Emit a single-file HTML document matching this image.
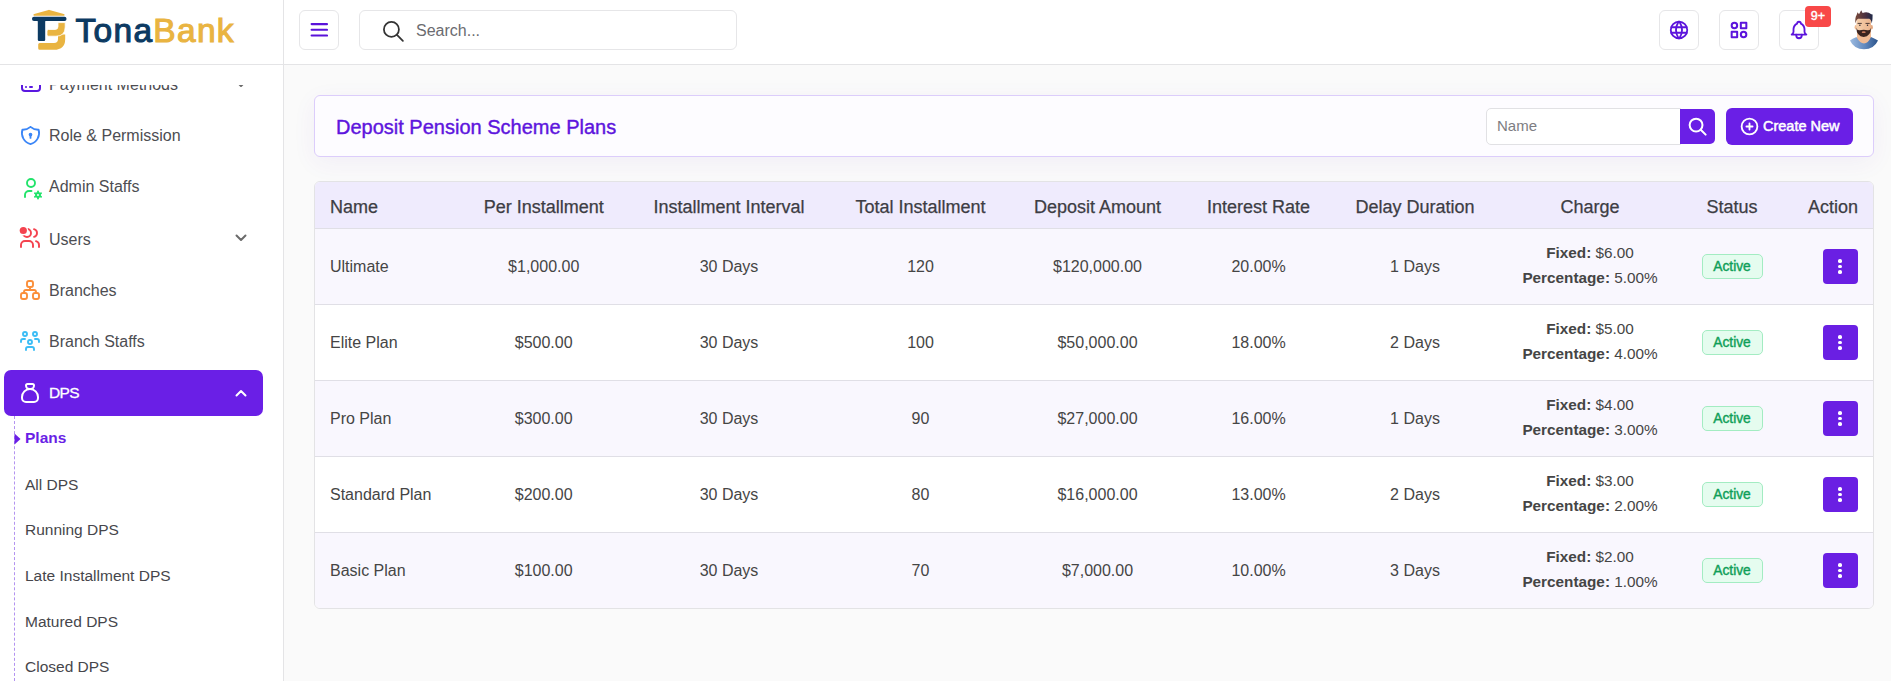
<!DOCTYPE html>
<html><head><meta charset="utf-8">
<style>
*{margin:0;padding:0;box-sizing:border-box}
html,body{width:1891px;height:681px;overflow:hidden;background:#fafafa;font-family:"Liberation Sans",sans-serif;color:#444}
.abs{position:absolute}
#hdr{position:absolute;left:0;top:0;width:1891px;height:65px;background:#fff;border-bottom:1px solid #e4e4e6;z-index:5}
#side{position:absolute;left:0;top:65px;width:284px;height:616px;background:#fff;border-right:1px solid #e4e4e6;z-index:4;overflow:hidden}
.btn40{position:absolute;top:10px;width:40px;height:40px;border:1px solid #e6e6e8;border-radius:6px;background:#fff}
.c{position:absolute;width:0;display:flex;justify-content:center;white-space:nowrap}

.tbl{position:absolute;left:314px;top:181px;width:1560px;height:428px;background:#fff;border:1px solid #e3e3e5;border-radius:6px;overflow:hidden}
.thead{position:absolute;left:0;top:0;width:1558px;height:47px;background:#efebfd;border-bottom:1px solid #e0dfe6}
.thead span{position:absolute;top:0;height:46px;padding-top:5px;display:flex;align-items:center;white-space:nowrap;font-size:18px;font-weight:normal;-webkit-text-stroke:0.25px #3d3d44;color:#3d3d44}
.thead .c{width:0;justify-content:center}
.thead .hr{right:15px}
.tr{position:absolute;left:0;width:1558px;height:76px;border-bottom:1px solid #e0dfe6}
.tr>span{position:absolute;top:0;height:75px;display:flex;align-items:center;white-space:nowrap;font-size:16px;color:#454545}
.tr .bl{left:15px}
.tr .c{width:0;justify-content:center}
.tr .ch{flex-direction:column;line-height:25px;font-size:15.3px;padding-bottom:3px}
.tr .ch b{font-weight:bold}
.badge{display:inline-block;flex-shrink:0;width:61px;height:25px;line-height:24px;text-align:center;border:1px solid #a3ecc2;background:#e5fcef;color:#0f9f58;border-radius:5px;font-size:13.8px;font-weight:normal;-webkit-text-stroke:0.4px #0f9f58}
.act{left:1508px;width:35px;height:35px!important;top:20px!important;background:#6a1fe3;border-radius:4px;flex-direction:column;justify-content:center}
.act i{display:block;width:3.7px;height:3.7px;border-radius:50%;background:#fff;margin:1.05px auto;position:relative;left:-0.4px}

.mi{position:absolute;left:0;width:283px;height:40px}
.mic{position:absolute;left:20px;top:10px;width:20px;height:20px}
.mic svg{display:block}
.mil{position:absolute;left:49px;top:0;line-height:40px;font-size:16px;color:#505055;white-space:nowrap}
.chev{position:absolute;left:233px;top:13px}
.si{position:absolute;left:0;width:283px;height:30px}
.si span{position:absolute;left:25px;top:0;line-height:30px;font-size:16px;color:#45454a;white-space:nowrap}
</style></head><body>
<div id="hdr">
  <div class="abs" style="left:0;top:0;width:284px;height:64px;border-right:1px solid #e4e4e6"></div>
  <svg class="abs" style="left:30px;top:8px" width="38" height="44" viewBox="0 0 38 44">
    <path d="M3.5 7.2 Q3 6.2 4.2 5.9 L18.6 1.9 Q19 1.8 19.4 1.9 L33.8 5.9 Q35 6.2 34.5 7.2 Q34.2 7.7 33.5 7.7 L4.5 7.7 Q3.8 7.7 3.5 7.2Z" fill="#e9b441"/>
    <rect x="2" y="8.7" width="34.5" height="4.3" rx="2" fill="#0c3a62"/>
    <rect x="7.8" y="12" width="7.4" height="21" rx="1.2" fill="#0c3a62"/>
    <path d="M28 26.4 H35.2 V31 Q35.2 41.8 24 41.8 H9.7 Q8.2 41.8 8.2 40.3 V36.5 Q8.2 35 9.7 35 H24 Q28 35 28 31Z" fill="#e9b441"/>
    <path d="M28 14.6 H35.2 V19 Q35.2 28.2 26 28.2 H18.5 Q17 28.2 17 26.7 V23 Q17 21.5 18.5 21.5 H25 Q28 21.5 28 18.5Z" fill="#e9b441" stroke="#fff" stroke-width="0.8"/>
  </svg>
  <div class="abs" style="left:75.5px;top:11px;height:40px;line-height:40px;font-size:33.5px;font-weight:normal;letter-spacing:1.3px;white-space:nowrap"><span style="color:#0c3a62;-webkit-text-stroke:1.1px #0c3a62">Tona</span><span style="color:#e9b441;-webkit-text-stroke:1.1px #e9b441">Bank</span></div>
  <div class="btn40" style="left:299px">
    <svg class="abs" style="left:10px;top:11px" width="18" height="16" viewBox="0 0 18 16"><path d="M1.6 2.1h15.4M1.6 7.8h15.4M1.6 13.5h15.4" stroke="#5a12da" stroke-width="2.1" stroke-linecap="round"/></svg>
  </div>
  <div class="abs" style="left:359px;top:10px;width:378px;height:40px;border:1px solid #e6e6e8;border-radius:6px">
    <svg class="abs" style="left:21px;top:7.5px" width="25" height="25" viewBox="0 0 24 24" fill="none" stroke="#333" stroke-width="1.7" stroke-linecap="round"><circle cx="10" cy="10" r="7.2"/><path d="M15.3 15.3L21 21"/></svg>
    <span class="abs" style="left:56px;top:1px;line-height:38px;font-size:16px;color:#6b6b70">Search...</span>
  </div>
  <div class="btn40" style="left:1659px">
    <svg class="abs" style="left:8px;top:8px" width="22" height="22" viewBox="0 0 24 24" fill="none" stroke="#5c14dc" stroke-width="2" stroke-linecap="round"><circle cx="12" cy="12" r="9"/><path d="M3.6 9h16.8M3.6 15h16.8M11.5 3a17 17 0 0 0 0 18M12.5 3a17 17 0 0 1 0 18"/></svg>
  </div>
  <div class="btn40" style="left:1719px">
    <svg class="abs" style="left:8px;top:8px" width="22" height="22" viewBox="0 0 24 24" fill="none" stroke="#5c14dc" stroke-width="2.2" stroke-linejoin="round"><path d="M14 4h6v6h-6zM4 14h6v6h-6z"/><circle cx="17" cy="17" r="3"/><circle cx="7" cy="7" r="3"/></svg>
  </div>
  <div class="btn40" style="left:1779px">
    <svg class="abs" style="left:8px;top:8px" width="22" height="22" viewBox="0 0 24 24" fill="none" stroke="#5c14dc" stroke-width="2" stroke-linecap="round" stroke-linejoin="round"><path d="M10 5a2 2 0 1 1 4 0a7 7 0 0 1 4 6v3a4 4 0 0 0 2 3h-16a4 4 0 0 0 2 -3v-3a7 7 0 0 1 4 -6"/><path d="M9 17v1a3 3 0 0 0 6 0v-1"/></svg>
  </div>
  <div class="abs" style="left:1805px;top:6px;width:26px;height:21px;background:#f84848;border-radius:4px;color:#fff;font-size:12.5px;font-weight:normal;-webkit-text-stroke:0.4px #fff;line-height:21px;text-align:center">9+</div>
  <svg class="abs" style="left:1848px;top:9px" width="32" height="41" viewBox="0 0 32 41">
    <defs>
      <linearGradient id="sh" x1="0" x2="1"><stop offset="0" stop-color="#9dbbe0"/><stop offset="0.55" stop-color="#5f87bd"/><stop offset="1" stop-color="#2b538a"/></linearGradient>
      <linearGradient id="hr" x1="0" x2="1"><stop offset="0" stop-color="#7a4a3a"/><stop offset="0.6" stop-color="#4a3040"/><stop offset="1" stop-color="#1f2a4a"/></linearGradient>
      <linearGradient id="sk" x1="0" x2="1"><stop offset="0" stop-color="#f6d1ae"/><stop offset="1" stop-color="#eab38c"/></linearGradient>
    </defs>
    <path d="M9 21 L23 21 L23 35 L9 35 Z" fill="#f0bb95"/>
    <path d="M2 31.5 Q4 29.5 8.5 28 Q12 34.5 16 34.5 Q20 34.5 23 28 Q27 29.5 30 31.5 Q26 40.3 16 40.3 Q6 40.3 2 31.5Z" fill="url(#sh)"/>
    <ellipse cx="7.9" cy="18.3" rx="1.3" ry="2.3" fill="#efbb93"/>
    <ellipse cx="23.6" cy="18.3" rx="1.3" ry="2.3" fill="#e3a880"/>
    <ellipse cx="15.7" cy="17.5" rx="7.4" ry="9.6" fill="url(#sk)"/><path d="M8.4 17 L8.6 10 Q15.7 7 22.9 10 L23 17Z" fill="url(#sk)"/>
    <path d="M7.4 14.5 Q6.8 8.5 8.6 6 L9.6 3.2 L11 5.2 L13.2 1.3 L14.6 4 Q19.5 2.3 23.3 5.2 L24.6 5.6 Q24.8 9.5 23.8 14.5 Q23.2 10.5 21.2 9.7 L10.2 9.7 Q8.3 10.3 7.4 14.5Z" fill="url(#hr)"/>
    <path d="M10 14.4h3.4M17.9 14.4h3.4" stroke="#3a2a2a" stroke-width="0.9" stroke-linecap="round"/>
    <circle cx="11.9" cy="16.3" r="0.75" fill="#2d2a33"/><circle cx="19.5" cy="16.3" r="0.75" fill="#2d2a33"/>
    <path d="M8.3 18.8 Q8.6 27.6 15.7 27.9 Q22.8 27.6 23.1 18.8 Q22.2 21.8 19.6 21.3 Q15.7 20.3 11.8 21.3 Q9.2 21.8 8.3 18.8Z" fill="#3a2420"/>
    <ellipse cx="15.7" cy="23.2" rx="2" ry="0.9" fill="#c97a5c"/>
  </svg>
</div>
<div id="side">
<div class="abs" style="left:0;top:20px;width:283px;height:596px;overflow:hidden">
<svg class="abs" style="left:18.5px;top:-13.4px" width="24" height="24" viewBox="0 0 24 24" fill="none" stroke="#5a18e0" stroke-width="2" stroke-linecap="round" stroke-linejoin="round"><path d="M3 8a3 3 0 0 1 3 -3h12a3 3 0 0 1 3 3v8a3 3 0 0 1 -3 3h-12a3 3 0 0 1 -3 -3z"/><path d="M3 10h18"/><path d="M7 15h.01"/><path d="M11 15h2"/></svg>
<span class="abs" style="left:49px;top:-20.4px;line-height:40px;font-size:16px;color:#4d4d52;white-space:nowrap">Payment Methods</span>
<svg class="abs" style="left:234.5px;top:-5.2px" width="12" height="8" viewBox="0 0 12 8" fill="none" stroke="#6b6b6b" stroke-width="2" stroke-linecap="round" stroke-linejoin="round"><path d="M1.5 1.5L6 6L10.5 1.5"/></svg>
<svg class="abs" style="left:18.6px;top:38.5px" width="23" height="23" viewBox="0 0 24 24" fill="none" stroke="#3b86f7" stroke-width="1.9" stroke-linecap="round" stroke-linejoin="round"><path d="M12 3a12 12 0 0 0 8.5 3a12 12 0 0 1 -8.5 15a12 12 0 0 1 -8.5 -15a12 12 0 0 0 8.5 -3"/><path d="M12 11m-1 0a1 1 0 1 0 2 0a1 1 0 1 0 -2 0"/><path d="M12 12l0 2.5"/></svg>
<span class="abs" style="left:49px;top:31.2px;line-height:40px;font-size:16px;color:#4d4d52;white-space:nowrap">Role &amp; Permission</span>
<svg class="abs" style="left:18.6px;top:90.8px" width="24" height="24" viewBox="0 0 24 24" fill="none" stroke="#22e36b" stroke-width="1.9" stroke-linecap="round" stroke-linejoin="round"><path d="M6 21v-2a4 4 0 0 1 4 -4h2.5"/><path d="M8 7a4 4 0 1 0 8 0a4 4 0 0 0 -8 0"/><path d="M19.001 19m-2 0a2 2 0 1 0 4 0a2 2 0 1 0 -4 0"/><path d="M19.001 15.5v1.5"/><path d="M19.001 21v1.5"/><path d="M22.032 17.25l-1.299 .75"/><path d="M17.27 20l-1.3 .75"/><path d="M15.97 17.25l1.3 .75"/><path d="M20.733 20l1.3 .75"/></svg>
<span class="abs" style="left:49px;top:82.4px;line-height:40px;font-size:16px;color:#4d4d52;white-space:nowrap">Admin Staffs</span>
<svg class="abs" style="left:17.8px;top:140.6px" width="24" height="24" viewBox="0 0 24 24" fill="none" stroke="#f4434f" stroke-width="1.9" stroke-linecap="round" stroke-linejoin="round"><path d="M9 7m-4 0a4 4 0 1 0 8 0a4 4 0 1 0 -8 0"/><path d="M3 21v-2a4 4 0 0 1 4 -4h4a4 4 0 0 1 4 4v2"/><path d="M16 3.13a4 4 0 0 1 0 7.75"/><path d="M21 21v-2a4 4 0 0 0 -3 -3.85"/><circle cx="5.3" cy="4.5" r="4.9" fill="#fff" stroke="none"/><circle cx="5.3" cy="4.5" r="3.6" fill="#f4434f" stroke="none"/></svg>
<span class="abs" style="left:49px;top:134.8px;line-height:40px;font-size:16px;color:#4d4d52;white-space:nowrap">Users</span>
<svg class="abs" style="left:234.5px;top:149px" width="12" height="8" viewBox="0 0 12 8" fill="none" stroke="#6b6b6b" stroke-width="2" stroke-linecap="round" stroke-linejoin="round"><path d="M1.5 1.5L6 6L10.5 1.5"/></svg>
<svg class="abs" style="left:18.2px;top:192.5px" width="24" height="24" viewBox="0 0 24 24" fill="none" stroke="#fb8f3a" stroke-width="1.9" stroke-linecap="round" stroke-linejoin="round"><path d="M3 17a2 2 0 0 1 2 -2h2a2 2 0 0 1 2 2v2a2 2 0 0 1 -2 2h-2a2 2 0 0 1 -2 -2z"/><path d="M15 17a2 2 0 0 1 2 -2h2a2 2 0 0 1 2 2v2a2 2 0 0 1 -2 2h-2a2 2 0 0 1 -2 -2z"/><path d="M9 5a2 2 0 0 1 2 -2h2a2 2 0 0 1 2 2v2a2 2 0 0 1 -2 2h-2a2 2 0 0 1 -2 -2z"/><path d="M6 15v-1a2 2 0 0 1 2 -2h8a2 2 0 0 1 2 2v1"/><path d="M12 9l0 3"/></svg>
<span class="abs" style="left:49px;top:185.6px;line-height:40px;font-size:16px;color:#4d4d52;white-space:nowrap">Branches</span>
<svg class="abs" style="left:18.2px;top:243.8px" width="24" height="24" viewBox="0 0 24 24" fill="none" stroke="#3cbdf5" stroke-width="1.9" stroke-linecap="round" stroke-linejoin="round"><path d="M10 13a2 2 0 1 0 4 0a2 2 0 0 0 -4 0"/><path d="M8 21v-1a2 2 0 0 1 2 -2h4a2 2 0 0 1 2 2v1"/><path d="M15 5a2 2 0 1 0 4 0a2 2 0 0 0 -4 0"/><path d="M17 10h2a2 2 0 0 1 2 2v1"/><path d="M5 5a2 2 0 1 0 4 0a2 2 0 0 0 -4 0"/><path d="M3 13v-1a2 2 0 0 1 2 -2h2"/></svg>
<span class="abs" style="left:49px;top:236.9px;line-height:40px;font-size:16px;color:#4d4d52;white-space:nowrap">Branch Staffs</span>
<div class="abs" style="left:4px;top:285px;width:259px;height:46px;background:#6a1fe6;border-radius:7px"></div>
<svg class="abs" style="left:17.8px;top:296px" width="24" height="24" viewBox="0 0 24 24" fill="none" stroke="#fff" stroke-width="2" stroke-linecap="round" stroke-linejoin="round"><path d="M9.5 3h5a1.5 1.5 0 0 1 1.5 1.5a3.5 3.5 0 0 1 -3.5 3.5h-1a3.5 3.5 0 0 1 -3.5 -3.5a1.5 1.5 0 0 1 1.5 -1.5z"/><path d="M4 17v-1a8 8 0 1 1 16 0v1a4 4 0 0 1 -4 4h-8a4 4 0 0 1 -4 -4z"/></svg>
<span class="abs" style="left:49px;top:288.2px;line-height:40px;font-size:15.5px;color:#fff;white-space:nowrap;letter-spacing:-0.6px;-webkit-text-stroke:0.3px #fff">DPS</span>
<svg class="abs" style="left:234.5px;top:303.5px" width="12" height="8" viewBox="0 0 12 8" fill="none" stroke="#fff" stroke-width="2" stroke-linecap="round" stroke-linejoin="round"><path d="M1.5 6.5L6 2L10.5 6.5"/></svg>
<div class="abs" style="left:14px;top:331px;width:0;height:265px;border-left:1px dashed #b393f0"></div>
<svg class="abs" style="left:14px;top:348px" width="7" height="12" viewBox="0 0 7 12"><path d="M0.5 0.5L6.5 6L0.5 11.5Z" fill="#6a1fe6"/></svg>
<span class="abs" style="left:25px;top:333.4px;line-height:40px;font-size:15.5px;color:#6a1fe6;white-space:nowrap;font-weight:bold">Plans</span>
<span class="abs" style="left:25px;top:380.35px;line-height:40px;font-size:15.5px;color:#46464b;white-space:nowrap">All DPS</span>
<span class="abs" style="left:25px;top:425.3px;line-height:40px;font-size:15.5px;color:#46464b;white-space:nowrap">Running DPS</span>
<span class="abs" style="left:25px;top:471.1px;line-height:40px;font-size:15.5px;color:#46464b;white-space:nowrap">Late Installment DPS</span>
<span class="abs" style="left:25px;top:516.55px;line-height:40px;font-size:15.5px;color:#46464b;white-space:nowrap">Matured DPS</span>
<span class="abs" style="left:25px;top:562.3px;line-height:40px;font-size:15.5px;color:#46464b;white-space:nowrap">Closed DPS</span>
</div></div>
<div id="main">
  <div class="abs" style="left:314px;top:95px;width:1560px;height:62px;background:#fdfcff;border:1px solid #dccdfb;border-radius:6px;box-shadow:0 6px 24px rgba(100,50,190,0.06)">
  <span class="abs" style="left:21px;top:1px;line-height:60px;font-size:20px;color:#5d15dd;-webkit-text-stroke:0.4px #5d15dd;white-space:nowrap">Deposit Pension Scheme Plans</span>
  <div class="abs" style="left:1171px;top:12px;width:195px;height:37px;background:#fff;border:1px solid #e1e1e4;border-radius:5px 0 0 5px">
    <span class="abs" style="left:10px;top:-1px;line-height:35px;font-size:15px;color:#7d7d82">Name</span>
  </div>
  <div class="abs" style="left:1365px;top:13px;width:35px;height:35px;background:#6a1fe6;border-radius:0 5px 5px 0">
    <svg class="abs" style="left:6px;top:6px" width="23" height="23" viewBox="0 0 24 24" fill="none" stroke="#fff" stroke-width="2.1" stroke-linecap="round"><circle cx="10.5" cy="10.5" r="6.7"/><path d="M15.4 15.4L20.5 20.5"/></svg>
  </div>
  <div class="abs" style="left:1411px;top:12px;width:127px;height:37px;background:#6a1fe6;border-radius:6px">
    <svg class="abs" style="left:13px;top:8px" width="21" height="21" viewBox="0 0 24 24" fill="none" stroke="#fff" stroke-width="2.1" stroke-linecap="round"><circle cx="12" cy="12" r="9"/><path d="M8.5 12h7M12 8.5v7"/></svg>
    <span class="abs" style="left:37px;top:-0.5px;line-height:37px;font-size:14.5px;font-weight:normal;-webkit-text-stroke:0.5px #fff;color:#fff;white-space:nowrap">Create New</span>
  </div>
</div>
  <div class="tbl">
<div class="thead"><span class="hl" style="left:15px">Name</span>
<span class="c hc" style="left:228.7px">Per Installment</span>
<span class="c hc" style="left:414px">Installment Interval</span>
<span class="c hc" style="left:605.5px">Total Installment</span>
<span class="c hc" style="left:782.5px">Deposit Amount</span>
<span class="c hc" style="left:943.6px">Interest Rate</span>
<span class="c hc" style="left:1100px">Delay Duration</span>
<span class="c hc" style="left:1275px">Charge</span>
<span class="c hc" style="left:1417px">Status</span>
<span class="hr">Action</span></div>
<div class="tr" style="top:47px;background:#f9f7fe">
<span class="bl">Ultimate</span>
<span class="c bc" style="left:228.7px">$1,000.00</span>
<span class="c bc" style="left:414px">30 Days</span>
<span class="c bc" style="left:605.5px">120</span>
<span class="c bc" style="left:782.5px">$120,000.00</span>
<span class="c bc" style="left:943.6px">20.00%</span>
<span class="c bc" style="left:1100px">1 Days</span>
<span class="c bc ch" style="left:1275px"><span><b>Fixed:</b> $6.00</span><span><b>Percentage:</b> 5.00%</span></span>
<span class="c bc" style="left:1417px"><span class="badge">Active</span></span>
<span class="act"><i></i><i></i><i></i></span>
</div>
<div class="tr" style="top:123px;background:#fff">
<span class="bl">Elite Plan</span>
<span class="c bc" style="left:228.7px">$500.00</span>
<span class="c bc" style="left:414px">30 Days</span>
<span class="c bc" style="left:605.5px">100</span>
<span class="c bc" style="left:782.5px">$50,000.00</span>
<span class="c bc" style="left:943.6px">18.00%</span>
<span class="c bc" style="left:1100px">2 Days</span>
<span class="c bc ch" style="left:1275px"><span><b>Fixed:</b> $5.00</span><span><b>Percentage:</b> 4.00%</span></span>
<span class="c bc" style="left:1417px"><span class="badge">Active</span></span>
<span class="act"><i></i><i></i><i></i></span>
</div>
<div class="tr" style="top:199px;background:#f9f7fe">
<span class="bl">Pro Plan</span>
<span class="c bc" style="left:228.7px">$300.00</span>
<span class="c bc" style="left:414px">30 Days</span>
<span class="c bc" style="left:605.5px">90</span>
<span class="c bc" style="left:782.5px">$27,000.00</span>
<span class="c bc" style="left:943.6px">16.00%</span>
<span class="c bc" style="left:1100px">1 Days</span>
<span class="c bc ch" style="left:1275px"><span><b>Fixed:</b> $4.00</span><span><b>Percentage:</b> 3.00%</span></span>
<span class="c bc" style="left:1417px"><span class="badge">Active</span></span>
<span class="act"><i></i><i></i><i></i></span>
</div>
<div class="tr" style="top:275px;background:#fff">
<span class="bl">Standard Plan</span>
<span class="c bc" style="left:228.7px">$200.00</span>
<span class="c bc" style="left:414px">30 Days</span>
<span class="c bc" style="left:605.5px">80</span>
<span class="c bc" style="left:782.5px">$16,000.00</span>
<span class="c bc" style="left:943.6px">13.00%</span>
<span class="c bc" style="left:1100px">2 Days</span>
<span class="c bc ch" style="left:1275px"><span><b>Fixed:</b> $3.00</span><span><b>Percentage:</b> 2.00%</span></span>
<span class="c bc" style="left:1417px"><span class="badge">Active</span></span>
<span class="act"><i></i><i></i><i></i></span>
</div>
<div class="tr" style="top:351px;background:#f9f7fe">
<span class="bl">Basic Plan</span>
<span class="c bc" style="left:228.7px">$100.00</span>
<span class="c bc" style="left:414px">30 Days</span>
<span class="c bc" style="left:605.5px">70</span>
<span class="c bc" style="left:782.5px">$7,000.00</span>
<span class="c bc" style="left:943.6px">10.00%</span>
<span class="c bc" style="left:1100px">3 Days</span>
<span class="c bc ch" style="left:1275px"><span><b>Fixed:</b> $2.00</span><span><b>Percentage:</b> 1.00%</span></span>
<span class="c bc" style="left:1417px"><span class="badge">Active</span></span>
<span class="act"><i></i><i></i><i></i></span>
</div>
</div>
</div>
</body></html>
